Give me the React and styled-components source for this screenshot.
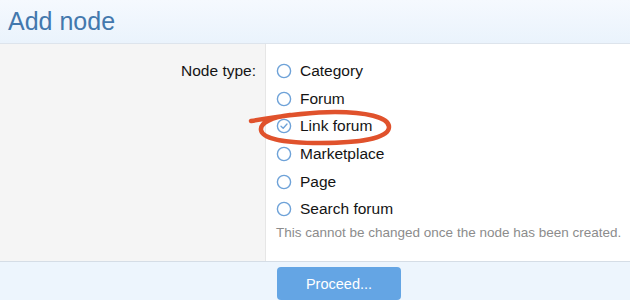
import React from "react";
import styled, { createGlobalStyle } from "styled-components";

const GlobalStyle = createGlobalStyle`
  body {
    margin: 0;
    font-family: "Liberation Sans", Arial, sans-serif;
    background: #fff;
  }
`;

const Page = styled.div`
  position: relative;
  width: 630px;
  height: 300px;
  overflow: hidden;
`;

const Header = styled.div`
  height: 43px;
  display: flex;
  align-items: center;
  padding-left: 8px;
  background: linear-gradient(to bottom, #f5f9fe, #eaf3fc);
  border-bottom: 1px solid #dde4ec;
  font-size: 25px;
  color: #4378ad;
`;

const Body = styled.div`
  display: flex;
  height: 217px;
`;

const LabelCol = styled.div`
  width: 266px;
  background: #f5f5f5;
  border-right: 1px solid #e6e6e6;
  padding: 13px 9px 0 0;
  box-sizing: border-box;
  text-align: right;
  font-size: 15.5px;
  line-height: 28px;
  color: #141414;
`;

const InputCol = styled.div`
  flex: 1;
  padding: 13px 6px 0 10px;
`;

const Option = styled.label`
  display: flex;
  align-items: center;
  gap: 8px;
  height: 27.7px;
  font-size: 15.5px;
  color: #141414;
`;

const Hint = styled.div`
  margin-top: 2px;
  font-size: 13.5px;
  line-height: 16px;
  white-space: nowrap;
  color: #8c8c8c;
`;

const Footer = styled.div`
  height: 39px;
  background: #edf5fd;
  border-top: 1px solid #d5dde6;
  padding-left: 277px;
  padding-top: 5px;
  box-sizing: border-box;
`;

const Button = styled.button`
  width: 124px;
  height: 33px;
  border: none;
  border-radius: 4px;
  background: #64a5e4;
  color: #fff;
  font-family: "Liberation Sans", Arial, sans-serif;
  font-size: 14.5px;
`;

const Mark = styled.svg`
  position: absolute;
  left: 0;
  top: 0;
  pointer-events: none;
`;

function Radio({ checked }) {
  return (
    <svg width="16" height="16" viewBox="0 0 16 16">
      <circle cx="8" cy="8" r="6.6" fill="#fff" stroke="#6ea2d8" strokeWidth="1.4" />
      {checked && (
        <path d="M5 8.2 L7.2 10.3 L11 6" fill="none" stroke="#6ea2d8" strokeWidth="1.3" strokeLinecap="round" strokeLinejoin="round" />
      )}
    </svg>
  );
}

const options = ["Category", "Forum", "Link forum", "Marketplace", "Page", "Search forum"];

export default function App() {
  return (
    <Page>
      <GlobalStyle />
      <Header>Add node</Header>
      <Body>
        <LabelCol>Node type:</LabelCol>
        <InputCol>
          {options.map((o) => (
            <Option key={o}>
              <Radio checked={o === "Link forum"} />
              {o}
            </Option>
          ))}
          <Hint>This cannot be changed once the node has been created.</Hint>
        </InputCol>
      </Body>
      <Footer>
        <Button>Proceed...</Button>
      </Footer>
      <Mark width="630" height="300">
        <path
          d="M251 121 C 275 117, 305 112, 335 112 C 365 112, 389 117, 389 127 C 389 138, 360 143, 320 143 C 285 143, 262 139, 261 130 C 260 123, 272 117, 290 115"
          fill="none"
          stroke="#e0522c"
          strokeWidth="4.5"
          strokeLinecap="round"
        />
      </Mark>
    </Page>
  );
}
